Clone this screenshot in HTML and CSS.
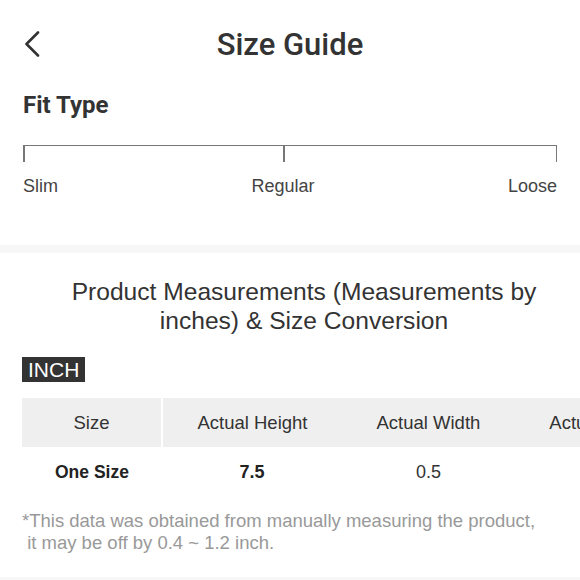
FILE: index.html
```html
<!DOCTYPE html>
<html>
<head>
<meta charset="utf-8">
<link rel="stylesheet" href="styles.css">
</head>
<body>
<div class="page">
  <header class="topbar">
    <div class="back">
      <svg width="18" height="26" viewBox="0 0 18 26"><path d="M15 1.5 L3.5 13 L15 24.5" fill="none" stroke="#333" stroke-width="2.6" stroke-linecap="round" stroke-linejoin="round"/></svg>
    </div>
    <h1 class="title">Size Guide</h1>
    <div></div>
  </header>

  <section class="fit">
    <h2 class="fit-title">Fit Type</h2>
    <div class="scale">
      <span class="tick"></span><span class="tick mid"></span><span class="tick end"></span>
    </div>
    <div class="scale-labels">
      <span>Slim</span><span>Regular</span><span>Loose</span>
    </div>
  </section>

  <div class="divider"></div>

  <section class="measure">
    <h3 class="measure-title">Product Measurements (Measurements by inches) &amp; Size Conversion</h3>
    <span class="unit">INCH</span>
    <div class="table-wrap">
      <table class="sizes">
        <thead>
          <tr><th class="first">Size</th><th>Actual Height</th><th>Actual Width</th><th>Actual Length</th></tr>
        </thead>
        <tbody>
          <tr><td class="first bold">One Size</td><td class="bold">7.5</td><td>0.5</td><td>0.5</td></tr>
        </tbody>
      </table>
    </div>
    <p class="note">*This data was obtained from manually measuring the product,<br>&nbsp;it may be off by 0.4 ~ 1.2 inch.</p>
  </section>

  <div class="divider bottom"></div>
</div>
</body>
</html>
```

FILE: styles.css
```css
html, body {
  margin: 0;
  padding: 0;
  background: #fff;
}
.page {
  width: 580px;
  height: 580px;
  overflow: hidden;
  font-family: "Liberation Sans", Arial, sans-serif;
  color: #333;
}
.topbar {
  height: 90px;
  display: grid;
  grid-template-columns: 1fr auto 1fr;
  align-items: center;
}
.back {
  padding-left: 23px;
  display: flex;
  align-items: center;
  height: 26px;
  margin-top: -2px;
}
.title {
  margin: 0;
  font-family: Roboto, "Liberation Sans", sans-serif;
  font-weight: 500;
  font-size: 31px;
  line-height: 34px;
  color: #333;
}
.fit {
  padding: 0 23px;
}
.fit-title {
  margin: 1px 0 0 0;
  font-family: Roboto, "Liberation Sans", sans-serif;
  font-weight: 700;
  font-size: 24px;
  line-height: 28px;
  color: #333;
}
.scale {
  margin-top: 26px;
  height: 16px;
  border-top: 1.5px solid #777;
  display: flex;
}
.tick {
  width: 1.5px;
  height: 16px;
  background: #777;
}
.tick.mid {
  margin-left: 258.5px;
}
.tick.end {
  margin-left: auto;
}
.scale-labels {
  margin-top: 13px;
  display: flex;
  justify-content: space-between;
  font-size: 18px;
  line-height: 22px;
  color: #444;
}
.divider {
  margin-top: 48px;
  height: 8px;
  background: #f7f7f7;
}
.measure {
  padding: 24px 22px 0 22px;
}
.measure-title {
  margin: 0 0 0 28px;
  text-align: center;
  font-weight: 400;
  font-size: 24.6px;
  line-height: 29px;
  color: #333;
}
.unit {
  display: inline-block;
  margin-top: 22px;
  background: #333;
  color: #fff;
  font-size: 21px;
  line-height: 25px;
  padding: 0 6px 0 6px;
}
.table-wrap {
  margin-top: 16px;
  margin-right: -22px;
  overflow: hidden;
}
.sizes {
  border-collapse: collapse;
  white-space: nowrap;
}
.sizes th {
  background: #efefef;
  font-weight: 400;
  font-size: 18.5px;
  height: 49px;
  padding: 0 34.5px;
  color: #333;
}
.sizes td {
  font-size: 18px;
  height: 50px;
  padding: 0 34.5px;
  text-align: center;
  color: #333;
}
.sizes th.first,
.sizes td.first {
  padding: 0 33px;
}
.sizes th.first {
  border-right: 2px solid #fff;
}
.sizes td.bold {
  font-weight: 700;
  color: #222;
}
.sizes td.first.bold {
  font-size: 17.5px;
}
.note {
  margin: 13px 0 0 0;
  font-size: 18.5px;
  line-height: 22px;
  color: #999;
}
.divider.bottom {
  margin-top: 23px;
  height: 10px;
}
```
